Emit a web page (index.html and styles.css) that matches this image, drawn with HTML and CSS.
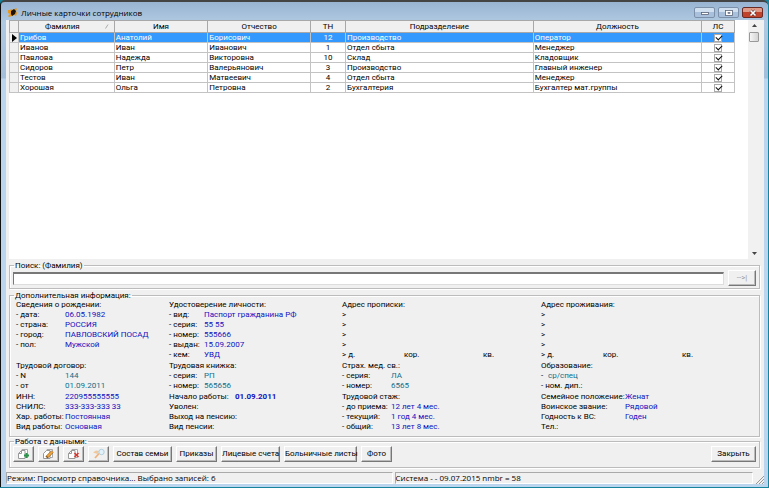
FILE: index.html
```
<!DOCTYPE html>
<html lang="ru">
<head>
<meta charset="utf-8">
<title>Личные карточки сотрудников</title>
<link rel="stylesheet" href="styles.css">
</head>
<body>
<main class="window">
  <header class="titlebar">
    <svg class="app-icon" viewBox="0 0 10 10"><path d="M0 2l2 0 1-1 2 1 3-2 1 1-1 2 1 2-1 3-2-1-2 1-3 1-1-1 2-2-2-1z" fill="#e8981c"/><path d="M3 3l3-2 2 2-1 3-3 2-1-2z" fill="#1c1408"/></svg>
    <h1>Личные карточки сотрудников</h1>
    <div class="caption-buttons">
      <button type="button" class="cap" aria-label="Свернуть"><svg viewBox="0 0 10 8"><rect x="1.500" y="3.500" width="7" height="2" fill="#fff" stroke="#5a6478" stroke-width=".8"/></svg></button>
      <button type="button" class="cap" aria-label="Развернуть"><svg viewBox="0 0 10 8"><rect x="1.500" y="1.500" width="7" height="5" fill="#fff" stroke="#5a6478" stroke-width=".8"/><rect x="4" y="3.500" width="2" height="1" fill="#8fa6c4" stroke="#5a6478" stroke-width=".6"/></svg></button>
      <button type="button" class="cap cap-close" aria-label="Закрыть окно"><svg viewBox="0 0 10 8"><path d="M2.500 1.500l5 5m0-5l-5 5" stroke="#5e2a2a" stroke-width="2.800"/><path d="M2.500 1.500l5 5m0-5l-5 5" stroke="#fff" stroke-width="1.700"/></svg></button>
    </div>
  </header>

  <div class="client">
    <section class="grid-pane">
      <div class="grid-body">
        <table class="grid">
          <colgroup><col class="c-mark"><col class="c-fam"><col class="c-name"><col class="c-pat"><col class="c-tn"><col class="c-dep"><col class="c-pos"><col class="c-ls"></colgroup>
          <thead>
            <tr><th></th><th class="sorted">Фамилия<svg class="sort" viewBox="0 0 4 5"><path d="M.5 4.500L3 .5" stroke="#999" stroke-width=".8"/></svg></th><th>Имя</th><th>Отчество</th><th>ТН</th><th>Подразделение</th><th>Должность</th><th>ЛС</th></tr>
          </thead>
          <tbody>
            <tr class="selected"><td class="mark"><svg viewBox="0 0 5 8"><path d="M0 0l5 4-5 4z" fill="#000"/></svg></td><td>Грибов</td><td>Анатолий</td><td>Борисович</td><td class="mid">12</td><td>Производство</td><td>Оператор</td><td class="mid"><input type="checkbox" checked aria-label="ЛС"></td></tr>
            <tr><td class="mark"></td><td>Иванов</td><td>Иван</td><td>Иванович</td><td class="mid">1</td><td>Отдел сбыта</td><td>Менеджер</td><td class="mid"><input type="checkbox" checked aria-label="ЛС"></td></tr>
            <tr><td class="mark"></td><td>Павлова</td><td>Надежда</td><td>Викторовна</td><td class="mid">10</td><td>Склад</td><td>Кладовщик</td><td class="mid"><input type="checkbox" checked aria-label="ЛС"></td></tr>
            <tr><td class="mark"></td><td>Сидоров</td><td>Петр</td><td>Валерьянович</td><td class="mid">3</td><td>Производство</td><td>Главный инженер</td><td class="mid"><input type="checkbox" checked aria-label="ЛС"></td></tr>
            <tr><td class="mark"></td><td>Тестов</td><td>Иван</td><td>Матвеевич</td><td class="mid">4</td><td>Отдел сбыта</td><td>Менеджер</td><td class="mid"><input type="checkbox" checked aria-label="ЛС"></td></tr>
            <tr><td class="mark"></td><td>Хорошая</td><td>Ольга</td><td>Петровна</td><td class="mid">2</td><td>Бухгалтерия</td><td>Бухгалтер мат.группы</td><td class="mid"><input type="checkbox" checked aria-label="ЛС"></td></tr>
          </tbody>
        </table>
      </div>
      <div class="scrollbar">
        <svg class="arrow" viewBox="0 0 5 3"><path d="M0 3L2.500 0 5 3z" fill="#444"/></svg>
        <div class="thumb"></div>
        <svg class="arrow arrow-down" viewBox="0 0 5 3"><path d="M0 0h5L2.500 3z" fill="#444"/></svg>
      </div>
    </section>

    <fieldset class="group search">
      <legend><label for="find">Поиск: (Фамилия)</label></legend>
      <div class="search-row">
        <input id="find" type="text">
        <button type="button" class="btn go" disabled>--&gt;|</button>
      </div>
    </fieldset>

    <fieldset class="group info">
      <legend>Дополнительная информация:</legend>
      <div class="info-grid">
        <dl class="block k1"><dt class="head">Сведения о рождении:</dt><dt>- дата:</dt><dd>06.05.1982</dd><dt>- страна:</dt><dd>РОССИЯ</dd><dt>- город:</dt><dd>ПАВЛОВСКИЙ ПОСАД</dd><dt>- пол:</dt><dd>Мужской</dd></dl>
        <dl class="block k2"><dt class="head">Удостоверение личности:</dt><dt>- вид:</dt><dd>Паспорт гражданина РФ</dd><dt>- серия:</dt><dd>55 55</dd><dt>- номер:</dt><dd>555666</dd><dt>- выдан:</dt><dd>15.09.2007</dd><dt>- кем:</dt><dd>УВД</dd></dl>
        <div class="address"><p>Адрес прописки:</p><p>&gt;</p><p>&gt;</p><p>&gt;</p><p>&gt;</p><p class="house"><span>&gt; д.</span><span>кор.</span><span>кв.</span></p></div>
        <div class="address"><p>Адрес проживания:</p><p>&gt;</p><p>&gt;</p><p>&gt;</p><p>&gt;</p><p class="house"><span>&gt; д.</span><span>кор.</span><span>кв.</span></p></div>

        <dl class="block k1 teal"><dt class="head">Трудовой договор:</dt><dt>- N</dt><dd>144</dd><dt>- от</dt><dd>01.09.2011</dd></dl>
        <dl class="block k2 teal"><dt class="head">Трудовая книжка:</dt><dt>- серия:</dt><dd>РП</dd><dt>- номер:</dt><dd>565656</dd></dl>
        <dl class="block k3 teal"><dt class="head">Страх. мед. св.:</dt><dt>- серия:</dt><dd>ЛА</dd><dt>- номер:</dt><dd>6565</dd></dl>
        <dl class="block k5 teal"><dt class="head">Образование:</dt><dt>-</dt><dd>ср/спец</dd><dt class="head">- ном. дип.:</dt></dl>

        <dl class="block k1"><dt>ИНН:</dt><dd>220955555555</dd><dt>СНИЛС:</dt><dd>333-333-333 33</dd><dt>Хар. работы:</dt><dd>Постоянная</dd><dt>Вид работы:</dt><dd>Основная</dd></dl>
        <dl class="block k4"><dt>Начало работы:</dt><dd class="strong">01.09.2011</dd><dt class="head">Уволен:</dt><dt class="head">Выход на пенсию:</dt><dt class="head">Вид пенсии:</dt></dl>
        <dl class="block k3"><dt class="head">Трудовой стаж:</dt><dt>- до приема:</dt><dd>12 лет 4 мес.</dd><dt>- текущий:</dt><dd>1 год 4 мес.</dd><dt>- общий:</dt><dd>13 лет 8 мес.</dd></dl>
        <dl class="block k6"><dt>Семейное положение:</dt><dd>Женат</dd><dt>Воинское звание:</dt><dd>Рядовой</dd><dt>Годность к ВС:</dt><dd>Годен</dd><dt class="head">Тел.:</dt></dl>
      </div>
    </fieldset>

    <fieldset class="group actions">
      <legend>Работа с данными:</legend>
      <div class="action-row">
        <button type="button" class="btn icon" aria-label="Добавить"><svg viewBox="0 0 14 12"><path d="M5 1.500h5.500v8H5z" fill="#fff" stroke="#a8a8a8"/><path d="M4.500 2.500l-3 3v5h6.500v-8z" fill="#fff" stroke="#999"/><path d="M1.500 5.500h3v-3" stroke="#999"/><path d="M7 7.500h5M9.500 5v5" stroke="#2f8f4c" stroke-width="1.900"/></svg></button>
        <button type="button" class="btn icon" aria-label="Изменить"><svg viewBox="0 0 14 12"><path d="M5 1.500h5.500v8H5z" fill="#fff" stroke="#a8a8a8"/><path d="M4.500 2.500l-3 3v5h6.500v-8z" fill="#fff" stroke="#999"/><path d="M4.500 9.500l6-6" stroke="#8a5a20" stroke-width="3"/><path d="M5.500 8.500l5-5" stroke="#f4a63a" stroke-width="1.800"/></svg></button>
        <button type="button" class="btn icon" aria-label="Удалить"><svg viewBox="0 0 14 12"><path d="M5 1.500h5.500v8H5z" fill="#fff" stroke="#a8a8a8"/><path d="M4.500 2.500l-3 3v5h6.500v-8z" fill="#fff" stroke="#999"/><path d="M1.500 5.500h3v-3" stroke="#999"/><path d="M7.500 5l4 4m0-4l-4 4" stroke="#d8352c" stroke-width="1.600"/></svg></button>
        <button type="button" class="btn icon" aria-label="Найти"><svg viewBox="0 0 14 12"><path d="M3 10l4-4.500" stroke="#eeb27c" stroke-width="1.800"/><path d="M1 4.500l3-2 3 .5-1.500 3z" fill="#f2c79c"/><circle cx="9.500" cy="4" r="2.700" fill="#e2f2fa" stroke="#b0cddd"/></svg></button>
        <button type="button" class="btn w1">Состав семьи</button>
        <button type="button" class="btn w2">Приказы</button>
        <button type="button" class="btn w1">Лицевые счета</button>
        <button type="button" class="btn w3">Больничные листы</button>
        <button type="button" class="btn w4">Фото</button>
        <button type="button" class="btn close">Закрыть</button>
      </div>
    </fieldset>

    <footer class="status">
      <div>Режим: Просмотр справочника... Выбрано записей: 6</div>
      <div>Система - - 09.07.2015 nmbr = 58</div>
      <svg class="grip" viewBox="0 0 9 9"><path d="M1 9L9 1M4 9l5-5M7 9l2-2" stroke="#999"/></svg>
    </footer>
  </div>
</main>
</body>
</html>
```
FILE: styles.css
```
* { box-sizing: border-box; }
body {
  margin: 0;
  min-height: 100vh;
  display: flex;
  background: #16849c;
  font: 8px/10px Roboto, "Liberation Sans", sans-serif;
  color: #000;
}
h1, p, dl, dd { margin: 0; }
svg { display: block; fill: none; }
button, input { font: inherit; color: inherit; margin: 0; }

.window {
  flex: 1;
  display: flex;
  flex-direction: column;
  margin: 0 1px 1px 0;
  padding: 0 4px 3px 5px;
  background: linear-gradient(#98b4d2, #b0c9e2 20px, #a3bedb 76px, #bcd5ee 77px);
  border-left: 1px solid #111;
  border-top: 2px solid #444;
  border-radius: 5px 5px 0 0;
}
.titlebar {
  display: flex;
  align-items: center;
  height: 18px;
  margin: 0 -4px 0 -5px;
  padding: 3px 5px 0 7px;
}
.app-icon { width: 10px; height: 10px; }
h1 { flex: 1; margin-left: 3px; font: 8px/12px "Open Sans", sans-serif; }
.caption-buttons { display: flex; gap: 3px; }
.cap {
  display: grid;
  place-items: center;
  width: 21px;
  height: 11px;
  padding: 0;
  border: 1px solid #7d90aa;
  border-radius: 2px;
  background: linear-gradient(#d0dff0 50%, #a9c0dc 50%);
}
.cap svg { width: 10px; height: 8px; }
.cap-close { border-color: #6b2a24; background: linear-gradient(#e09a88 50%, #c0432c 50%); }

.client {
  flex: 1;
  display: flex;
  flex-direction: column;
  padding: 0 4px 0 3px;
  background: #f0f0f0;
}
.grid-pane { flex: 1; display: flex; margin-bottom: 2px; background: #fff; }
.grid-body { flex: 1; }
.grid { width: calc(100% - 13px); table-layout: fixed; border-collapse: collapse; }
.c-mark { width: 9px; }
.c-fam { width: 13.200%; }
.c-name { width: 12.900%; }
.c-pat { width: 14.200%; }
.c-tn { width: 4.800%; }
.c-pos { width: 23.200%; }
.c-ls { width: 33px; }
.grid th, .grid td {
  height: 10px;
  padding: 0 1px;
  border: 1px solid #c3c3c3;
  line-height: 9px;
  text-align: left;
  font-weight: normal;
  white-space: nowrap;
}
.grid th { height: 12px; background: #f0f0f0; text-align: center; border-color: #a8a8a8; }
.sorted .sort { float: right; width: 4px; height: 5px; margin: 2px 4px 0 0; }
.grid .mid { text-align: center; }
.grid .mark { padding: 0 0 0 2px; background: #f0f0f0; }
.mark svg { width: 5px; height: 8px; }
.selected td { background: #3399ff; color: #fff; }
.grid input {
  appearance: none;
  display: block;
  width: 8px;
  height: 8px;
  margin: 0 auto;
  border: 1px solid #aaa;
  background: #fff;
  position: relative;
}
.grid input:checked::after {
  content: "";
  position: absolute;
  left: 1px;
  top: 0;
  width: 5px;
  height: 3px;
  border: solid #111;
  border-width: 0 0 1px 1px;
  transform: rotate(-45deg);
}
.scrollbar {
  display: flex;
  flex-direction: column;
  align-items: center;
  width: 12px;
  padding: 4px 0;
  background: #f1f1f1;
}
.arrow { width: 5px; height: 3px; }
.arrow-down { margin-top: auto; }
.thumb {
  width: 10px;
  height: 10px;
  margin-top: 5px;
  border: 1px solid #999;
  border-radius: 1px;
  background: linear-gradient(90deg, #f6f6f6, #d4d4d4);
}

.group {
  min-width: 0;
  margin: 0;
  padding: 0 3px;
  border: 1px solid #bcbcbc;
  box-shadow: inset 1px 1px #fff, 1px 1px #fff;
}
.group legend { margin-left: 1px; padding: 0 1px; line-height: 9px; }
.search { margin-bottom: 2px; }
.search-row { display: flex; align-items: center; gap: 4px; padding-bottom: 2px; }
.search-row input {
  flex: 1;
  min-width: 0;
  height: 13px;
  padding: 0 2px;
  border: 1px solid #ddd;
  border-top: 2px solid #777;
  border-left-color: #777;
  background: #fff;
}
.btn {
  display: grid;
  place-items: center;
  height: 16px;
  padding: 0;
  border: 1px solid;
  border-color: #fff #777 #777 #fff;
  box-shadow: inset -1px -1px #bbb;
  background: #f0f0f0;
  white-space: nowrap;
}
.go { width: 28px; color: #999; }

.info-grid {
  display: grid;
  grid-template-columns: 153fr 173fr 199fr 215fr;
  row-gap: 1px;
  padding: 0 0 4px 3px;
}
.block { display: grid; align-content: start; grid-auto-rows: 10px; white-space: nowrap; }
.head { grid-column: 1 / -1; }
dd { color: #1010c0; }
.teal dd { color: #0f6f8c; }
.strong { font-weight: bold; }
.k1 { grid-template-columns: 49px 1fr; }
.k2 { grid-template-columns: 35px 1fr; }
.k3 { grid-template-columns: 49px 1fr; }
.k4 { grid-template-columns: 66px 1fr; }
.k5 { grid-template-columns: 7px 1fr; }
.k6 { grid-template-columns: 84px 1fr; }
.house { display: grid; grid-template-columns: 62px 79px 1fr; }

.action-row { display: flex; gap: 4px; padding-bottom: 5px; }
.icon { width: 21px; }
.icon svg { width: 14px; height: 12px; }
.w1 { width: 59px; }
.w2 { width: 41px; }
.w3 { width: 73px; }
.w4 { width: 31px; }
.close { width: 45px; margin-left: auto; }

.status {
  display: grid;
  grid-template-columns: 51% 1fr 9px;
  gap: 2px;
  margin: 4px -4px 0 -3px;
  font: 8px/10px "Open Sans", sans-serif;
}
.status div { border: 1px solid; border-color: #aaa #fff #fff #aaa; }
.grip { width: 9px; height: 9px; align-self: end; }
```
